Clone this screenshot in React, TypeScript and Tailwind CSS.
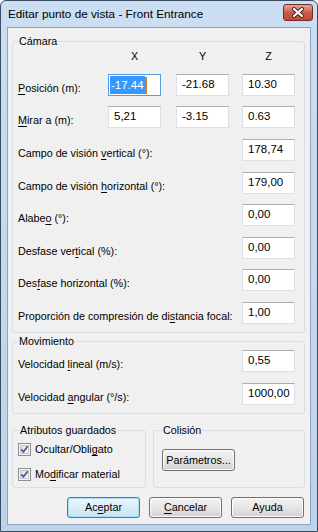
import React from 'react';

const font = { fontFamily: '"Liberation Sans", Arial, sans-serif' };

function U({ children }: { children: React.ReactNode }) {
  return <span className="underline underline-offset-[2px]">{children}</span>;
}

function Field({ value, focused }: { value: string; focused?: boolean }) {
  if (focused) {
    return (
      <div className="w-[53px] h-[22px] border border-[#569de5] bg-white flex items-center pl-[1px] text-[11.5px]">
        <span className="bg-[#3399ff] text-white leading-[18px] px-[1px]">{value}</span>
        <span className="w-[2px] h-[17px] bg-[#e0781e]" />
      </div>
    );
  }
  return (
    <div className="w-[53px] h-[22px] border border-[#dbdfe6] border-t-[#abadb3] bg-white pl-[5px] pt-[2px] leading-[15px] text-[11.5px] whitespace-nowrap overflow-hidden">
      {value}
    </div>
  );
}

function Row({ label, children, mt }: { label: React.ReactNode; children: React.ReactNode; mt: string }) {
  return (
    <div className={`flex items-start ${mt}`}>
      <div className="flex-1 pt-[7px] leading-[15px] whitespace-nowrap">{label}</div>
      {children}
    </div>
  );
}

function Check({ label }: { label: React.ReactNode }) {
  return (
    <div className="flex items-center gap-[4px] h-[13px]">
      <svg width="13" height="13" viewBox="0 0 13 13">
        <defs>
          <linearGradient id="cb" x1="0" y1="0" x2="1" y2="1">
            <stop offset="0" stopColor="#dcdcdc" />
            <stop offset="1" stopColor="#fbfbfb" />
          </linearGradient>
        </defs>
        <rect x="0.5" y="0.5" width="12" height="12" fill="#f4f4f4" stroke="#8e8f8f" />
        <rect x="2.5" y="2.5" width="8" height="8" fill="url(#cb)" stroke="#c8c8c8" />
        <path d="M3.3 6.4 L5.4 8.8 L9.8 3.2" fill="none" stroke="#4a5f8e" strokeWidth="1.8" />
      </svg>
      <span className="leading-[15px] whitespace-nowrap">{label}</span>
    </div>
  );
}

function Button({ children, w, primary }: { children: React.ReactNode; w: string; primary?: boolean }) {
  return (
    <div
      className={`${w} h-[21px] rounded-[3px] border flex items-center justify-center leading-[15px] ${
        primary
          ? 'border-[#3c7fb1] bg-linear-to-b from-[#eaf6fd] via-[#dcedf8] to-[#c5e3f5] shadow-[inset_0_0_0_1px_#a9dcf6]'
          : 'border-[#707070] bg-linear-to-b from-[#f2f2f2] via-[#e6e6e6] to-[#d2d2d2] shadow-[inset_0_0_0_1px_#fcfcfc]'
      }`}
    >
      {children}
    </div>
  );
}

export default function App() {
  return (
    <div style={font} className="w-[318px] h-[532px] text-[10.75px] text-black bg-white">
      <div className="w-[318px] h-[532px] rounded-t-[6px] border border-[#3b4d63] bg-linear-to-b from-[#cbdef2] to-[#bdd3eb] px-[6px] pb-[6px] flex flex-col">
        <div className="h-[26px] flex items-center justify-between pl-[1px]">
          <span className="text-[11.75px] leading-[16px]">Editar punto de vista - Front Entrance</span>
          <div className="w-[30px] h-[17px] -mt-[3px] mr-[-2px] rounded-[3px] border border-[#6e2b2b] bg-linear-to-b from-[#e8a895] via-[#c95c4c] to-[#c2473a] flex items-center justify-center">
            <svg width="14" height="11" viewBox="0 0 14 11">
              <path d="M3 2 L11 9 M11 2 L3 9" stroke="#4a2020" strokeWidth="4" strokeLinecap="round" />
              <path d="M3 2 L11 9 M11 2 L3 9" stroke="#ffffff" strokeWidth="2.2" strokeLinecap="round" />
            </svg>
          </div>
        </div>
        <div className="flex-1 border border-[#8fa4ba] bg-[#f0f0f0] flex flex-col">
          <fieldset className="ml-[4px] mt-[6px] w-[293px] border border-[#d5dfe5] rounded-[3px] pl-[5px] pr-[9px] pb-[8px]">
            <legend className="px-[1px] leading-[15px]">Cámara</legend>
            <div className="flex h-[15px] leading-[15px]">
              <div className="flex-1" />
              <div className="w-[53px] text-center">X</div>
              <div className="w-[53px] ml-[15px] text-center">Y</div>
              <div className="w-[53px] ml-[13px] text-center">Z</div>
            </div>
            <Row mt="mt-[10px]" label={<><U>P</U>osición (m):</>}>
              <Field value="-17.44" focused />
              <div className="ml-[15px]"><Field value="-21.68" /></div>
              <div className="ml-[13px]"><Field value="10.30" /></div>
            </Row>
            <Row mt="mt-[10px]" label={<><U>M</U>irar a (m):</>}>
              <Field value="5,21" />
              <div className="ml-[15px]"><Field value="-3.15" /></div>
              <div className="ml-[13px]"><Field value="0.63" /></div>
            </Row>
            <Row mt="mt-[11px]" label={<>Campo de visión <U>v</U>ertical (°):</>}>
              <Field value="178,74" />
            </Row>
            <Row mt="mt-[11px]" label={<>Campo de visión <U>h</U>orizontal (°):</>}>
              <Field value="179,00" />
            </Row>
            <Row mt="mt-[10px]" label={<>Alabe<U>o</U> (°):</>}>
              <Field value="0,00" />
            </Row>
            <Row mt="mt-[11px]" label={<>Desfase ver<U>t</U>ical (%):</>}>
              <Field value="0,00" />
            </Row>
            <Row mt="mt-[10px]" label={<>Des<U>f</U>ase horizontal (%):</>}>
              <Field value="0,00" />
            </Row>
            <Row mt="mt-[11px]" label={<>Proporción de compresión de di<U>s</U>tancia focal:</>}>
              <Field value="1,00" />
            </Row>
          </fieldset>

          <fieldset className="ml-[4px] mt-[1px] w-[293px] border border-[#d5dfe5] rounded-[3px] pl-[5px] pr-[9px] pb-[8px]">
            <legend className="px-[1px] leading-[15px]">Movimiento</legend>
            <Row mt="mt-[1px]" label={<>Velocidad <U>l</U>ineal (m/s):</>}>
              <Field value="0,55" />
            </Row>
            <Row mt="mt-[11px]" label={<>Velocidad <U>a</U>ngular (°/s):</>}>
              <Field value="1000,00" />
            </Row>
          </fieldset>

          <div className="flex ml-[4px] mt-[9px] gap-[7px]">
            <fieldset className="w-[134px] h-[65px] border border-[#d5dfe5] rounded-[3px] pl-[5px]">
              <legend className="px-[1px] ml-[1px] leading-[15px]">Atributos guardados</legend>
              <div className="mt-[5px]">
                <Check label={<>Ocultar/Obli<U>g</U>ato</>} />
              </div>
              <div className="mt-[12px]">
                <Check label={<>Mo<U>d</U>ificar material</>} />
              </div>
            </fieldset>
            <fieldset className="w-[152px] h-[65px] border border-[#d5dfe5] rounded-[3px] pl-[8px]">
              <legend className="px-[1px] leading-[15px]">Colisión</legend>
              <div className="mt-[11px]">
                <Button w="w-[73px] h-[22px]">Parámetros...</Button>
              </div>
            </fieldset>
          </div>

          <div className="flex justify-end gap-[9px] mt-[9px] pr-[6px]">
            <Button w="w-[73px]" primary>Ac<U>e</U>ptar</Button>
            <Button w="w-[73px]"><U>C</U>ancelar</Button>
            <Button w="w-[73px]">Ayuda</Button>
          </div>
        </div>
      </div>
    </div>
  );
}
